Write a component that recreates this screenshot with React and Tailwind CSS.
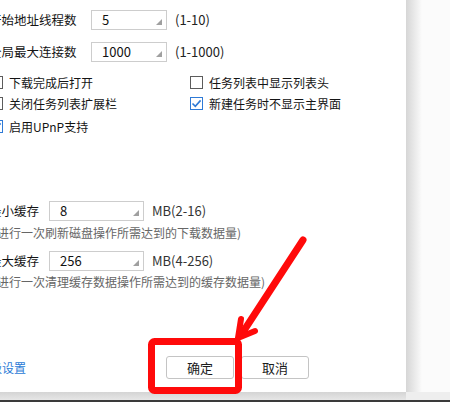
const font = { fontFamily: '"Noto Sans CJK SC", "Noto Sans", sans-serif' };

function Combo({ value, width }) {
  return (
    <div className={`relative flex h-[20px] ${width} items-center border border-[#cdcdcd] bg-white pl-[10px] text-[13px] text-[#111]`}>
      {value}
      <svg className="absolute bottom-[4px] right-[4px]" width="6" height="6" viewBox="0 0 6 6">
        <polygon points="6,0 6,6 0,6" fill="#a0a0a0" />
      </svg>
    </div>
  );
}

function Check({ label, checked }) {
  return (
    <div className="flex h-[21px] items-center gap-[6px]">
      <div className={`flex h-[13px] w-[13px] shrink-0 items-center justify-center border bg-white ${checked ? "border-[#2f7ad6]" : "border-[#5c5c5c]"}`}>
        {checked && (
          <svg width="11" height="11" viewBox="0 0 11 11">
            <path d="M1.5 5.5 L4.3 8.3 L9.6 2.4" fill="none" stroke="#2f7ad6" strokeWidth="1.6" />
          </svg>
        )}
      </div>
      <span className="text-[12px] leading-none text-[#141414]">{label}</span>
    </div>
  );
}

export default function App() {
  return (
    <div className="relative h-[402px] w-[450px] overflow-hidden bg-[#fbfbfb]" style={font}>
      <div className="flex h-[392px]">
        <div className="h-full w-[406px] overflow-hidden bg-white">
          <div className="ml-[-11px] flex flex-col pt-[10px] text-[12.5px] text-[#141414]">
            <div className="flex h-[20px] items-center">
              <span className="w-[102px]">开始地址线程数</span>
              <Combo value="5" width="w-[76px]" />
              <span className="ml-[8px] text-[13px] text-[#222]">(1-10)</span>
            </div>
            <div className="mt-[12px] flex h-[20px] items-center">
              <span className="w-[102px]">全局最大连接数</span>
              <Combo value="1000" width="w-[76px]" />
              <span className="ml-[8px] text-[13px] text-[#222]">(1-1000)</span>
            </div>
            <div className="ml-[1px] mt-[10px] grid grid-cols-[200px_1fr]">
              <Check label="下载完成后打开" />
              <Check label="任务列表中显示列表头" />
              <Check label="关闭任务列表扩展栏" />
              <Check label="新建任务时不显示主界面" checked />
            </div>
            <div className="ml-[1px] mt-[2px]">
              <Check label="启用UPnP支持" checked />
            </div>
            <div className="mt-[64px] flex h-[20px] items-center">
              <span className="w-[60px]">最小缓存</span>
              <Combo value="8" width="w-[95px]" />
              <span className="ml-[8px] text-[13px] text-[#333]">MB(2-16)</span>
            </div>
            <div className="ml-[-8px] mt-[6px] text-[12px] leading-[12px] text-[#666]">(每进行一次刷新磁盘操作所需达到的下载数据量)</div>
            <div className="mt-[12px] flex h-[20px] items-center">
              <span className="w-[60px]">最大缓存</span>
              <Combo value="256" width="w-[95px]" />
              <span className="ml-[8px] text-[13px] text-[#333]">MB(4-256)</span>
            </div>
            <div className="ml-[-8px] mt-[5px] text-[12px] leading-[12px] text-[#666]">(每进行一次清理缓存数据操作所需达到的缓存数据量)</div>
          </div>
          <div className="mt-[68px] flex items-center">
            <span className="ml-[-22px] w-[188px] text-[12px] text-[#2b7bd6]">高级设置</span>
            <div className="flex gap-[7px]">
              <button className="h-[23px] w-[68px] rounded-[3px] border border-[#c4c4c4] bg-white text-[13px] text-[#1c1c1c]">确定</button>
              <button className="h-[23px] w-[68px] rounded-[3px] border border-[#c4c4c4] bg-white text-[13px] text-[#1c1c1c]">取消</button>
            </div>
          </div>
        </div>
        <div className="h-full w-[16px] bg-gradient-to-r from-[#d6d6d6] to-[#fbfbfb]" />
      </div>
      <div className="flex h-[8px]">
        <div className="w-[406px] bg-gradient-to-b from-[#d4d4d4] to-[#e6e6e6]" />
        <div className="flex-1 bg-[#eeeeee]" />
      </div>
      <div className="h-[2px] bg-[#3a3a3a]" />

      <svg className="pointer-events-none absolute left-0 top-0" width="450" height="402" viewBox="0 0 450 402">
        <rect x="151.5" y="341.5" width="87" height="49" rx="3" fill="none" stroke="#ff0a0a" strokeWidth="7" />
        <line x1="303" y1="240" x2="243" y2="332" stroke="#ff0a0a" strokeWidth="7" strokeLinecap="round" />
        <polyline points="241,319 238,338 255,331" fill="none" stroke="#ff0a0a" strokeWidth="6" strokeLinejoin="miter" strokeLinecap="round" />
      </svg>
    </div>
  );
}
